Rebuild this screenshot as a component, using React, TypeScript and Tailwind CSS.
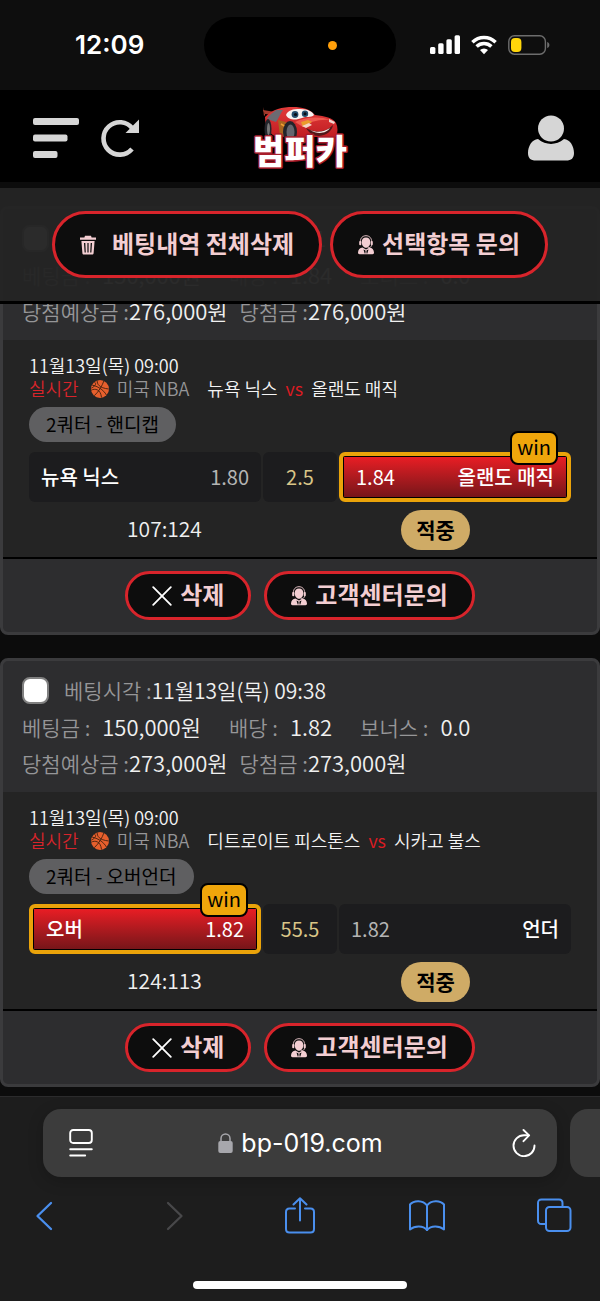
import React from "react";

type Side = { name: string; odds: string };

type Bet = {
  id: string;
  time: string;
  odds: string;
  payout: string;
  home: string;
  away: string;
  market: string;
  left: Side;
  line: string;
  right: Side;
  winner: "left" | "right";
  score: string;
};

const bets: Bet[] = [
  {
    id: "bet-1",
    time: "11월13일(목) 09:41",
    odds: "1.84",
    payout: "276,000원",
    home: "뉴욕 닉스",
    away: "올랜도 매직",
    market: "2쿼터 - 핸디캡",
    left: { name: "뉴욕 닉스", odds: "1.80" },
    line: "2.5",
    right: { name: "올랜도 매직", odds: "1.84" },
    winner: "right",
    score: "107:124",
  },
  {
    id: "bet-2",
    time: "11월13일(목) 09:38",
    odds: "1.82",
    payout: "273,000원",
    home: "디트로이트 피스톤스",
    away: "시카고 불스",
    market: "2쿼터 - 오버언더",
    left: { name: "오버", odds: "1.82" },
    line: "55.5",
    right: { name: "언더", odds: "1.82" },
    winner: "left",
    score: "124:113",
  },
];

function StatusBar() {
  return (
    <div className="grid h-[90px] grid-cols-[1fr_192px_1fr] items-center bg-[#0e0e0e]">
      <span className="pl-[75px] font-['Inter',sans-serif] text-[26px] leading-[30px] font-semibold text-white">12:09</span>
      <div className="flex h-14 items-center justify-center rounded-full bg-black pl-16">
        <span className="size-[9px] rounded-full bg-[#ff9f0a]" />
      </div>
      <div className="flex items-center gap-[11px] pl-[34px]">
        <svg width="30" height="20" viewBox="0 0 30 20" fill="#fff" aria-hidden="true">
          <rect x="0" y="12" width="5.4" height="7" rx="1.5" />
          <rect x="8.2" y="8.3" width="5.4" height="10.7" rx="1.5" />
          <rect x="16.4" y="4.3" width="5.4" height="14.7" rx="1.5" />
          <rect x="24.6" y="0.2" width="5.4" height="18.8" rx="1.5" />
        </svg>
        <svg width="26" height="20" viewBox="0 0 26 20" fill="none" stroke="#fff" strokeWidth="3.4" aria-hidden="true">
          <path d="M1.4 7.2a16.6 16.6 0 0 1 23.2 0" />
          <path d="M5.6 11.5a10.6 10.6 0 0 1 14.8 0" />
          <path d="M13 19.2l-4-4.2a5.8 5.8 0 0 1 8 0z" fill="#fff" stroke="none" />
        </svg>
        <svg width="42" height="20" viewBox="0 0 42 20" fill="none" aria-hidden="true">
          <rect x="0.8" y="0.8" width="36.6" height="18.4" rx="5.6" stroke="#6d6d6d" strokeWidth="1.4" />
          <rect x="3" y="3" width="10.4" height="14" rx="4" fill="#ffd60a" />
          <path d="M39.2 7v6c1.600-.6 2.200-1.800 2.200-3s-.6-2.400-2.200-3z" fill="#6d6d6d" />
        </svg>
      </div>
    </div>
  );
}

function Logo() {
  return (
    <svg width="98" height="76" viewBox="0 -4 98 76" role="img" aria-label="범퍼카">
      <defs>
        <linearGradient id="paint" x1="0" y1="0" x2="0" y2="1">
          <stop offset="0" stopColor="#e23b3a" />
          <stop offset="1" stopColor="#c01d22" />
        </linearGradient>
      </defs>
      <g transform="translate(0 -2)">
        <path d="M12 8l12 2v3l-10-1z" fill="#a3392b" />
        <path d="M12 5l2 8-1 1z" fill="#c04a38" />
        <path d="M14 15c8-8 17-10 28-10 9 0 17 2 22 8 10 1 18 3 21 8 2 4 2 9 0 14H26c-6-2-12-8-12-20z" fill="url(#paint)" />
        <path d="M25 8c-5 4-8 6-9 9l9 3c3-4 4-8 7-12z" fill="#6c6b72" />
        <path d="M27 18l8 2 8 14H29z" fill="#a8641f" />
        <path d="M30 22l7 4-3 1 4 5" fill="none" stroke="#f0a032" strokeWidth="1.5" />
        <ellipse cx="17" cy="27" rx="3.5" ry="10" fill="#23252b" />
        <ellipse cx="17.5" cy="27" rx="1.5" ry="6" fill="#777" />
        <ellipse cx="39" cy="30" rx="7" ry="11" fill="#22242a" />
        <ellipse cx="39.5" cy="30" rx="4" ry="7.5" fill="#65666e" />
        <path d="M35 13c2-5 7-6 14-6 8 0 13 3 14 6-3 3-8 1-12 3-5 2-13 3-16-3z" fill="#f7f4f2" />
        <circle cx="44" cy="12.5" r="3.4" fill="#244c6c" />
        <circle cx="44.5" cy="12.5" r="1.6" fill="#090c14" />
        <circle cx="54" cy="11.8" r="3.2" fill="#244c6c" />
        <circle cx="54" cy="11.8" r="1.5" fill="#090c14" />
        <path d="M44 20c10-5 24-6 36-2-13-1-22 2-28 7z" fill="#ef5a50" />
        <path d="M50 20l7-2 4 2-9 5z" fill="#eb9c2c" />
        <path d="M51 24l7-3 3 2-6 3z" fill="#f4d3c4" />
        <path d="M78 17l6 3-1 2-5-2z" fill="#f1d6cf" />
        <path d="M55 26c9 5 19 5 27-3-1 6-6 10-14 11-6 0-10-3-13-8z" fill="#521718" />
        <path d="M59 28c7 3 14 2 20-2-3 5-12 7-20 2z" fill="#f6ece8" />
      </g>
      <text
        x="49"
        y="60"
        textAnchor="middle"
        fontSize="34"
        className="fill-white stroke-[#a81e2c] font-['Noto_Sans_CJK_KR',sans-serif] font-black [paint-order:stroke]"
        strokeWidth="3"
        strokeLinejoin="round"
      >
        범퍼카
      </text>
    </svg>
  );
}

function NavBar() {
  return (
    <nav className="grid h-[92px] grid-cols-[1fr_auto_1fr] items-center bg-black px-[26px] pt-1">
      <div className="flex items-center gap-[22px] pl-[7px]">
        <button type="button" aria-label="메뉴">
          <svg width="46" height="42" viewBox="0 0 46 42" fill="#d6d6d6">
            <rect x="0" y="1" width="46" height="7" rx="2" />
            <rect x="0" y="17.5" width="34.5" height="7" rx="2" />
            <rect x="0" y="34" width="24.5" height="7" rx="2" />
          </svg>
        </button>
        <button type="button" aria-label="새로고침">
          <svg width="40" height="40" viewBox="0 0 40 40" fill="none">
            <path d="M31.5 10.5A16.200 16.200 0 1 0 31 31" stroke="#d6d6d6" strokeWidth="4.6" />
            <path d="M38 1.500V15H24.500z" fill="#d6d6d6" />
          </svg>
        </button>
      </div>
      <a href="#home">
        <Logo />
      </a>
      <button type="button" aria-label="내 정보" className="justify-self-end">
        <svg width="46" height="46" viewBox="0 0 46 46" fill="#d6d6d6">
          <circle cx="23" cy="13.5" r="13" />
          <path d="M10 24C4 24.500 0 31 0 38c0 5 2.500 7.500 8 7.500h30c5.500 0 8-2.500 8-7.500 0-7-4-13.500-10-14-8 6.500-18 6.500-26 0z" />
        </svg>
      </button>
    </nav>
  );
}

function TrashIcon() {
  return (
    <svg width="16" height="20" viewBox="0 0 16 20" fill="#f3ced2" aria-hidden="true">
      <path d="M5 0.800h6l.6 1.700H16v2.300H0V2.500h4.400z" />
      <path
        fillRule="evenodd"
        d="M1.400 6h13.200l-1 12.300c-.1.900-.6 1.300-1.400 1.300H3.800c-.8 0-1.300-.4-1.400-1.300zM4 8l.6 9.500h1.200L5.300 8zm3.400 0v9.500h1.200V8zm3.300 0l-.5 9.500h1.200L12 8z"
      />
    </svg>
  );
}

function AgentIcon() {
  return (
    <svg width="16" height="20" viewBox="0 0 16 20" fill="#f3ced2" aria-hidden="true">
      <path d="M2.300 7C2.300 2.800 4.800.700 8 .700S13.700 2.800 13.700 7" fill="none" stroke="#f3ced2" strokeWidth="0.9" />
      <path d="M8 2.400c2.900 0 4.300 1.900 4.300 4.500 0 3-1.800 5.800-4.300 5.800S3.700 9.900 3.700 6.900C3.700 4.300 5.100 2.400 8 2.400z" />
      <rect x="1.2" y="6" width="2.1" height="4.2" rx="1" />
      <rect x="12.7" y="6" width="2.1" height="4.2" rx="1" />
      <path d="M13.800 10c-.3 1.800-1.800 2.700-4 2.700" fill="none" stroke="#f3ced2" strokeWidth="0.8" />
      <path
        fillRule="evenodd"
        d="M4.500 12.600L8 14.500l3.500-1.900c2.700.5 4.300 2 4.500 5 0 1-.5 1.700-1.500 1.700h-13C.5 19.300 0 18.600 0 17.600c.2-3 1.800-4.500 4.500-5zM5.500 14.500l1.200 4h.7l.2-2.500-.4-.8zm5 0l-1.700.7-.4.800.2 2.500h.7z"
      />
    </svg>
  );
}

function CrossIcon() {
  return (
    <svg width="20" height="20" viewBox="0 0 20 20" fill="none" stroke="#fff" strokeWidth="1.8" strokeLinecap="round" aria-hidden="true">
      <path d="M1.200 1.200l17.600 17.600M18.800 1.200L1.200 18.800" />
    </svg>
  );
}

function BasketballIcon() {
  return (
    <svg width="18" height="18" viewBox="0 0 18 18" aria-hidden="true">
      <circle cx="9" cy="9" r="9" fill="#e65f2d" />
      <g fill="none" stroke="#40200f" strokeWidth="0.9">
        <path d="M1.200 5.200C6 6 12.500 9.500 15.500 15.200" />
        <path d="M12.800 1C11.500 5 8 11.500 3.200 15.800" />
        <path d="M6.200.600C6 4 8 8 17.800 9" />
        <path d="M.200 10.200c3.800-2 9.300-1.200 10.300 7.200" />
        <path d="M3.400 2.200c1.600.6 2.400 3-3 6" />
      </g>
    </svg>
  );
}

function PillButton({ icon, label, large }: { icon: React.ReactNode; label: string; large?: boolean }) {
  return (
    <button
      type="button"
      className={
        large
          ? "flex h-[67px] items-center gap-2 rounded-full border-[3px] border-[#d8242b] bg-[#0d0d0d] px-[25px] text-[24px] leading-[36px] font-bold whitespace-nowrap text-[#f3ced2]"
          : "flex h-[49px] items-center gap-2 rounded-full border-[3px] border-[#d8242b] bg-[#0d0d0d] px-6 text-[24px] leading-[36px] font-bold whitespace-nowrap text-[#f3ced2]"
      }
    >
      {icon}
      <span className="pb-1">{label}</span>
    </button>
  );
}

function OddsBox({ side, won, reversed }: { side: Side; won: boolean; reversed?: boolean }) {
  const name = <span className="font-medium text-white">{side.name}</span>;
  const odds = <span className={won ? "text-white" : "text-[#b4b4b4]"}>{side.odds}</span>;
  return (
    <div
      className={
        won
          ? "relative rounded-md border-4 border-[#eaa30a] bg-black p-px"
          : "flex items-center justify-between rounded-md bg-[#1c1c1e] px-3"
      }
    >
      {won ? (
        <div className="flex h-full items-center justify-between bg-linear-to-b from-[#e91d24] to-[#771519] px-3">
          {reversed ? odds : name}
          {reversed ? name : odds}
          <span className="absolute -top-[25px] right-[9px] rounded-lg border-2 border-black bg-[#efa60b] px-[5px] pb-[3px] text-[20px] leading-[27px] text-black">
            win
          </span>
        </div>
      ) : (
        <>
          {reversed ? odds : name}
          {reversed ? name : odds}
        </>
      )}
    </div>
  );
}

function BetCard({ bet }: { bet: Bet }) {
  return (
    <article className="overflow-hidden rounded-lg border-[3px] border-[#3b3b3d] bg-[#2d2d2f]">
      <header className="px-[19px] pt-[11px] pb-3 text-[21px] leading-[36px] font-[350] whitespace-nowrap text-[#969698]">
        <div className="flex h-9 items-center gap-[15px]">
          <input
            id={bet.id}
            type="checkbox"
            className="size-[27px] appearance-none rounded-lg border-2 border-[#808080] bg-white"
          />
          <label htmlFor={bet.id}>
            베팅시각 :<span className="text-[#f0f0f0]">{bet.time}</span>
          </label>
        </div>
        <div className="flex h-9 gap-7">
          <span>
            베팅금 :<span className="ml-3 text-[22px] text-[#f0f0f0]">150,000원</span>
          </span>
          <span>
            배당 :<span className="ml-3 text-[22px] text-[#f0f0f0]">{bet.odds}</span>
          </span>
          <span>
            보너스 :<span className="ml-3 text-[22px] text-[#f0f0f0]">0.0</span>
          </span>
        </div>
        <div className="flex h-9 gap-3">
          <span>
            당첨예상금 :<span className="text-[22px] text-[#f0f0f0]">{bet.payout}</span>
          </span>
          <span>
            당첨금 :<span className="text-[22px] text-[#f0f0f0]">{bet.payout}</span>
          </span>
        </div>
      </header>

      <section className="border-b-2 border-black bg-[#242424] px-[26px] pt-[14px] pb-[7px]">
        <div className="text-[18px] leading-[23px] font-[350] whitespace-nowrap text-[#f4f4f4]">
          <p>{bet.time.split(" ")[0]} 09:00</p>
          <p className="flex items-center">
            <span className="text-[#d8242b]">실시간</span>
            <span className="mr-2 ml-3">
              <BasketballIcon />
            </span>
            <span className="text-[#969698]">미국 NBA</span>
            <span className="ml-[18px]">{bet.home}</span>
            <span className="mx-2 text-[#e01b22]">vs</span>
            <span>{bet.away}</span>
          </p>
        </div>
        <div className="mt-[7px] flex">
          <span className="h-[35px] rounded-full bg-[#5f5f61] px-[17px] text-[19px] leading-[34px] text-black">
            {bet.market}
          </span>
        </div>
        <div className="mt-[10px] grid h-[50px] grid-cols-[1fr_74px_1fr] gap-[2px] text-[20px] leading-[30px] whitespace-nowrap">
          <OddsBox side={bet.left} won={bet.winner === "left"} />
          <div className="flex items-center justify-center rounded-md bg-[#1c1c1e] text-[#d9c587]">{bet.line}</div>
          <OddsBox side={bet.right} won={bet.winner === "right"} reversed />
        </div>
        <div className="mt-2 grid h-10 grid-cols-2 place-items-center">
          <span className="pb-1 text-[21px] leading-[30px] font-[350] text-[#f0f0f0]">{bet.score}</span>
          <span className="h-10 rounded-full bg-[#cfab66] px-[15px] text-[21px] leading-[38px] font-bold text-black">적중</span>
        </div>
      </section>

      <footer className="flex justify-center gap-[13px] py-3">
        <PillButton icon={<CrossIcon />} label="삭제" />
        <PillButton icon={<AgentIcon />} label="고객센터문의" />
      </footer>
    </article>
  );
}

function BrowserBar() {
  return (
    <footer className="grow overflow-hidden border-t border-[#2b2b2c] bg-[#1d1d1d]">
      <div className="flex gap-[13px] pt-3 pl-[43px]">
        <div className="flex h-[68px] grow items-center justify-between rounded-[18px] bg-[#3c3c3c] pr-[21px] pl-[26px] shadow-[0_4px_16px_rgba(0,0,0,0.2)]">
          <button type="button" aria-label="페이지 설정">
            <svg width="24" height="28" viewBox="0 0 24 28" fill="none" stroke="#fff" strokeWidth="1.9" strokeLinecap="round">
              <rect x="1.2" y="1" width="21.6" height="13" rx="3" />
              <path d="M1.200 20.200h21.600M1.200 26.500h15" />
            </svg>
          </button>
          <span className="flex items-center gap-2 pr-1 font-['Inter',sans-serif] text-[25px] leading-[32px] text-white">
            <svg width="15" height="20" viewBox="0 0 15 20" aria-hidden="true">
              <rect x="0.3" y="8" width="14.4" height="12" rx="2" fill="#a7a7ac" />
              <path d="M3 9V5.500a4.500 4.500 0 0 1 9 0V9" fill="none" stroke="#a7a7ac" strokeWidth="1.5" />
            </svg>
            bp-019.com
          </span>
          <button type="button" aria-label="다시 불러오기">
            <svg width="24" height="28" viewBox="0 0 24 28" fill="none" stroke="#fff" strokeWidth="1.9" strokeLinecap="round" strokeLinejoin="round">
              <path d="M16.500 6.200H12A10.500 10.500 0 1 0 22.500 16.500" />
              <path d="M11.500 1l5.600 5.400-5.600 5.800" />
            </svg>
          </button>
        </div>
        <div className="h-[68px] w-[30px] rounded-l-[18px] bg-[#3c3c3c]" />
      </div>
      <div className="mt-5 flex items-center justify-between pr-[28px] pl-[26px] text-[#4a8fee]">
        <button type="button" aria-label="뒤로">
          <svg width="36" height="38" viewBox="0 0 36 38" fill="none" stroke="currentColor" strokeWidth="2.3" strokeLinecap="round" strokeLinejoin="round">
            <path d="M25 6L11.500 19 25 32" />
          </svg>
        </button>
        <button type="button" aria-label="앞으로" className="text-[#48484a]">
          <svg width="36" height="38" viewBox="0 0 36 38" fill="none" stroke="currentColor" strokeWidth="2.3" strokeLinecap="round" strokeLinejoin="round">
            <path d="M14 6l13.500 13L14 32" />
          </svg>
        </button>
        <button type="button" aria-label="공유">
          <svg width="36" height="38" viewBox="0 0 36 38" fill="none" stroke="currentColor" strokeWidth="2" strokeLinecap="round" strokeLinejoin="round">
            <path d="M14 11.500H8.500C6.200 11.500 5 12.700 5 15v17c0 2.300 1.200 3.500 3.500 3.500h21c2.300 0 3.500-1.200 3.500-3.500V15c0-2.300-1.200-3.500-3.500-3.500H24" />
            <path d="M19 23.500V1.500M12.500 7.500L19 1.200l6.500 6.300" />
          </svg>
        </button>
        <button type="button" aria-label="책갈피">
          <svg width="36" height="38" viewBox="0 0 36 38" fill="none" stroke="currentColor" strokeWidth="2" strokeLinecap="round" strokeLinejoin="round">
            <path d="M18 8.500C14 3 5 3 1 7.500v25c5-4 13-4 17 .5 4-4.500 12-4.500 17-.5v-25c-4-4.500-13-4.500-17 1z" />
            <path d="M18 8.500V33" />
          </svg>
        </button>
        <button type="button" aria-label="탭">
          <svg width="36" height="38" viewBox="0 0 36 38" fill="none" stroke="currentColor" strokeWidth="2" strokeLinejoin="round">
            <rect x="10" y="10" width="24.5" height="24" rx="3.5" />
            <path d="M10 27H5.500C3.200 27 2 25.800 2 23.500V6c0-2.300 1.200-3.500 3.500-3.500H23c2.300 0 3.500 1.200 3.500 3.500v4" />
          </svg>
        </button>
      </div>
      <div className="mx-auto mt-[46px] mb-3 h-2 w-[214px] rounded-full bg-white" />
    </footer>
  );
}

export default function App() {
  return (
    <div className="flex min-h-screen flex-col bg-[#0c0c0c] font-['Noto_Sans_CJK_KR','Noto_Sans',sans-serif]">
      <div className="sticky top-0 z-10">
        <StatusBar />
        <NavBar />
        <div className="h-[6px] bg-[#0c0c0c]" />
        <div className="flex h-[116px] items-center justify-center gap-2 border-b-[3px] border-black bg-[#242424]/97">
          <PillButton
            large
            icon={
              <span className="pr-2">
                <TrashIcon />
              </span>
            }
            label="베팅내역 전체삭제"
          />
          <PillButton large icon={<AgentIcon />} label="선택항목 문의" />
        </div>
      </div>
      <main className="-mt-[98px] flex flex-col gap-[23px] pb-[9px]">
        {bets.map((bet) => (
          <BetCard key={bet.id} bet={bet} />
        ))}
      </main>
      <BrowserBar />
    </div>
  );
}
